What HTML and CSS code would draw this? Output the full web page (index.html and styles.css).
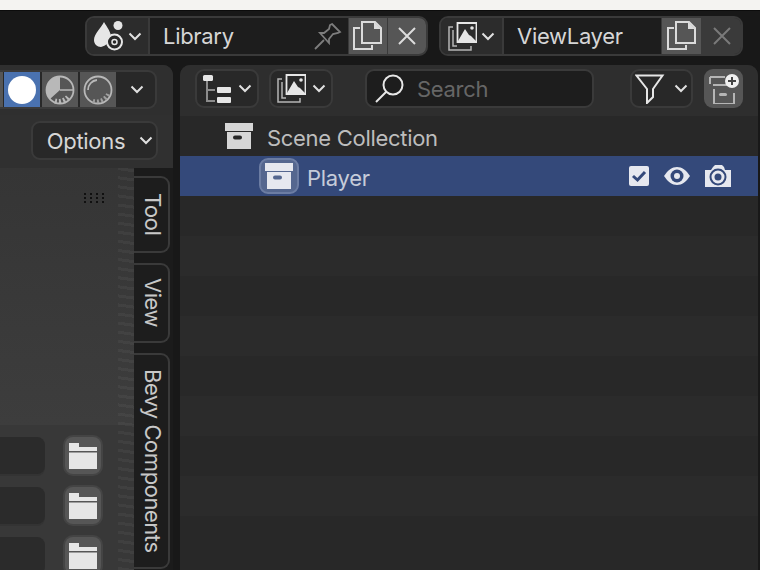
FILE: index.html
```html
<!DOCTYPE html>
<html lang="en">
<head>
<meta charset="UTF-8">
<title>Outliner</title>
<link rel="stylesheet" href="styles.css">
</head>
<body>
<svg class="defs" width="0" height="0">
  <symbol id="i-chevron" viewBox="0 0 14 9"><path d="M1.500 1.500 7 7l5.500-5.500" fill="none" stroke="currentColor" stroke-width="2"/></symbol>
  <symbol id="i-copy" viewBox="0 0 30 30"><path d="M7 7H1v21h18v-4" fill="none" stroke="currentColor" stroke-width="2"/><path d="M9 1h13l6 6v15H9z" fill="none" stroke="currentColor" stroke-width="2"/><path d="M21 1v7h7z" fill="currentColor"/></symbol>
  <symbol id="i-close" viewBox="0 0 18 18"><path d="M1 1l16 16M17 1 1 17" fill="none" stroke="currentColor" stroke-width="2"/></symbol>
  <symbol id="i-box" viewBox="0 0 28 26"><path fill-rule="evenodd" d="M0 0h28v8H0zM2 9h24v17H2zM10 12.500a1.500 1.500 0 0 0 0 4h5a2 2 0 0 0 0-4z" fill="currentColor"/></symbol>
  <symbol id="i-layers" viewBox="0 0 29 29"><path d="M5 5H1v23h22v-4M5 8v16h4" fill="none" stroke="#b5b5b5" stroke-width="1.500"/><path d="M9.500 1h19v19h-19z" fill="none" stroke="#e6e6e6" stroke-width="1.800"/><path d="M10 19l7-12 4 6 2 1 5 5v1z" fill="#e6e6e6"/><circle cx="24" cy="6" r="1.800" fill="#e6e6e6"/></symbol>
  <symbol id="i-folder" viewBox="0 0 28 26"><path d="M0 0h10v4h18v4H0zM0 9.500h28V26H0z" fill="currentColor"/></symbol>
</svg>

<div class="strip"></div>

<header class="topbar">
  <div class="group">
    <div class="drop">
      <svg width="30" height="30" viewBox="0 0 30 30"><path d="M10 1c3 5 7 10 7 15a8 8 0 0 1-3 6c-2 2-4 3-7 4-4 0-7-3-7-7 0-6 7-12 10-18z" fill="#e6e6e6"/><circle cx="24" cy="4.500" r="4.500" fill="#e6e6e6"/><circle cx="20.500" cy="21" r="7.500" fill="#282828" stroke="#e6e6e6" stroke-width="2"/><circle cx="20.500" cy="21" r="2.500" fill="none" stroke="#e6e6e6" stroke-width="1.500"/></svg>
      <svg class="chev"><use href="#i-chevron"/></svg>
    </div>
    <div class="field field-lib">
      <span>Library</span>
      <svg class="pin" width="28" height="28" viewBox="0 0 28 28"><path d="M1 27 10 18M18 2l8 8-2 1-5 1-4 5v4L6 11h4l5-4 1-4z" fill="none" stroke="#7d7d7d" stroke-width="1.800"/></svg>
    </div>
    <button class="tool on"><svg width="30" height="30" class="ic"><use href="#i-copy"/></svg></button>
    <button class="tool on"><svg width="18" height="18" class="ic"><use href="#i-close"/></svg></button>
  </div>
  <div class="group">
    <div class="drop">
      <svg width="29" height="29"><use href="#i-layers"/></svg>
      <svg class="chev"><use href="#i-chevron"/></svg>
    </div>
    <div class="field field-layer"><span>ViewLayer</span></div>
    <button class="tool on"><svg width="30" height="30" class="ic"><use href="#i-copy"/></svg></button>
    <button class="tool off"><svg width="18" height="18" class="dim"><use href="#i-close"/></svg></button>
  </div>
</header>

<main class="areas">
  <section class="viewport-area">
    <div class="vp-header">
      <div class="shading">
        <span class="shade-sliver"></span>
        <button class="shade active"><svg width="32" height="32" viewBox="0 0 32 32"><circle cx="16" cy="16" r="14" fill="#fff"/></svg></button>
        <button class="shade"><svg width="30" height="30" viewBox="0 0 30 30"><circle cx="15" cy="15" r="13.500" fill="none" stroke="#b8b8b8" stroke-width="1.800"/><path d="M15 15V1.500A13.500 13.500 0 0 0 5 24z" fill="#b8b8b8"/><path d="M15 15h13" stroke="#b8b8b8" stroke-width="1.500"/><path d="M10 26a13 13 0 0 0 13-4" fill="none" stroke="#b8b8b8" stroke-width="5" stroke-dasharray="2 2"/></svg></button>
        <button class="shade"><svg width="30" height="30" viewBox="0 0 30 30"><circle cx="15" cy="15" r="13.500" fill="none" stroke="#b8b8b8" stroke-width="1.800"/><path d="M5 15a10 10 0 0 1 9-10" fill="none" stroke="#b8b8b8" stroke-width="1.800"/><path d="M10 26a13 13 0 0 0 15-7" fill="none" stroke="#a0a0a0" stroke-width="4" stroke-dasharray="2 2"/></svg></button>
        <button class="shade-more"><svg class="chev"><use href="#i-chevron"/></svg></button>
      </div>
    </div>
    <div class="vp-options">
      <button class="options"><span>Options</span><svg class="chev"><use href="#i-chevron"/></svg></button>
    </div>
    <div class="vp-body">
      <div class="canvas">
        <div class="canvas-top"><span class="grip"></span></div>
        <div class="canvas-rows">
          <div class="path-row"><span class="path-field"></span><button class="folder"><svg width="28" height="26"><use href="#i-folder"/></svg></button></div>
          <div class="path-row"><span class="path-field"></span><button class="folder"><svg width="28" height="26"><use href="#i-folder"/></svg></button></div>
          <div class="path-row"><span class="path-field"></span><button class="folder"><svg width="28" height="26"><use href="#i-folder"/></svg></button></div>
        </div>
        <div class="texture"></div>
      </div>
      <nav class="tabs">
        <div class="tab tab-tool"><span>Tool</span></div>
        <div class="tab tab-view"><span>View</span></div>
        <div class="tab tab-bevy"><span>Bevy Components</span></div>
      </nav>
    </div>
  </section>

  <section class="outliner">
    <div class="ol-header">
      <button class="pill pill-mode">
        <svg width="30" height="30" viewBox="0 0 30 30"><path d="M5 7v20h8M5 16h8" fill="none" stroke="#8c8c8c" stroke-width="2"/><rect x="1" y="1" width="10" height="6" rx="1.500" fill="#e6e6e6"/><rect x="15" y="13" width="14" height="6" rx="1" fill="#e6e6e6"/><rect x="15" y="23" width="14" height="6" rx="1" fill="#e6e6e6"/></svg>
        <svg class="chev"><use href="#i-chevron"/></svg>
      </button>
      <button class="pill pill-layer">
        <svg width="29" height="29"><use href="#i-layers"/></svg>
        <svg class="chev"><use href="#i-chevron"/></svg>
      </button>
      <div class="search">
        <svg width="30" height="30" viewBox="0 0 30 30"><circle cx="18" cy="11" r="9.500" fill="none" stroke="#e6e6e6" stroke-width="2"/><path d="M11 18 1 28" stroke="#e6e6e6" stroke-width="2"/></svg>
        <span>Search</span>
      </div>
      <button class="pill pill-filter">
        <svg width="30" height="30" viewBox="0 0 30 30"><path d="M1.500 1.500h26L18 15v8l-6 6V15z" fill="none" stroke="#e6e6e6" stroke-width="2"/></svg>
        <svg class="chev"><use href="#i-chevron"/></svg>
      </button>
      <button class="new-coll">
        <svg width="30" height="30" viewBox="0 0 30 30"><path d="M4 11h16M5 15v15h20V19M1 3h15M1 3v7" fill="none" stroke="#b5b5b5" stroke-width="2"/><rect x="10" y="19" width="8" height="3" rx="1.500" fill="#b5b5b5"/><circle cx="23" cy="7" r="7" fill="#f0f0f0"/><path d="M23 3v8M19 7h8" stroke="#444" stroke-width="2"/></svg>
      </button>
    </div>
    <div class="tree">
      <div class="row row-scene">
        <svg class="coll" width="28" height="26"><use href="#i-box"/></svg>
        <span>Scene Collection</span>
      </div>
      <div class="row row-player">
        <span class="coll-btn"><svg width="28" height="26"><use href="#i-box"/></svg></span>
        <span>Player</span>
        <div class="row-icons">
          <svg width="20" height="20" viewBox="0 0 20 20"><rect width="20" height="20" rx="2" fill="#e6e8ef"/><path d="M4 10l4.500 4L16 6" fill="none" stroke="#34497a" stroke-width="3"/></svg>
          <svg width="26" height="18" viewBox="0 0 26 18"><path d="M0 9C4 3 8 0 13 0s9 3 13 9c-4 6-8 9-13 9S4 15 0 9z" fill="#e6e8ef"/><circle cx="13" cy="9" r="6.500" fill="#34497a"/><circle cx="13" cy="9" r="3" fill="#e6e8ef"/></svg>
          <svg width="26" height="22" viewBox="0 0 26 22"><path d="M0 5h6l2-3 2-2h7l2 2 1 3h6v17H0z" fill="#e6e8ef"/><circle cx="13" cy="12" r="7.500" fill="none" stroke="#34497a" stroke-width="2"/><circle cx="13" cy="12" r="3.500" fill="#34497a"/></svg>
        </div>
      </div>
      <div class="row"></div><div class="row"></div><div class="row"></div><div class="row"></div>
      <div class="row"></div><div class="row"></div><div class="row"></div><div class="row"></div>
    </div>
  </section>
</main>
</body>
</html>
```

FILE: styles.css
```css
html, body {margin:0; padding:0; height:570px; overflow:hidden;}
body {background:#181818; color:#d6d6d6; font-family:"Inter","Liberation Sans",sans-serif; font-size:22px; letter-spacing:-0.3px;}
button {font:inherit; letter-spacing:inherit; color:inherit; border:0; padding:0; margin:0; background:none; display:flex; align-items:center; justify-content:center;}
svg {display:block; flex:none;}
.defs {position:absolute;}
.chev {width:14px; height:9px; color:#e0e0e0;}
.ic {color:#dcdcdc;}
.dim {color:#7a7a7a;}

.strip {height:10px; background:#f4f3f1; border-bottom:1px solid #0c0c0c;}

/* top bar */
.topbar {height:54px; box-sizing:border-box; padding:5px 17px 0 0; display:flex; justify-content:flex-end; align-items:flex-start; gap:11px;}
.group {display:flex; height:40px; box-sizing:border-box; border:2px solid #3a3a3a; border-radius:9px; background:#282828; overflow:hidden;}
.drop {width:61px; display:flex; align-items:center; gap:4px; padding-left:7px; box-sizing:border-box; background:#2c2c2c;}
.field {display:flex; align-items:center; background:#1d1d1d; border-left:2px solid #3a3a3a; padding-left:13px; box-sizing:border-box;}
.field-lib {width:200px;}
.field-layer {width:159px;}
.pin {margin-left:auto; margin-right:6px;}
.tool {width:40px; border-left:1px solid #3a3a3a; box-sizing:border-box;}
.field-lib ~ .tool {width:39px;}
.tool.on {background:#565656;}
.tool.off {background:#3a3a3a;}

/* layout */
.areas {display:flex; gap:7px; height:505px;}
.viewport-area {width:173px; flex:none; display:flex; flex-direction:column; background:#303030; border-radius:0 10px 0 0; overflow:hidden;}
.outliner {width:578px; flex:none; display:flex; flex-direction:column; background:#282828; border-radius:10px 10px 0 0; overflow:hidden;}

/* left area */
.vp-header {height:50px; flex:none; box-sizing:border-box; padding:5px 16px 0 0; background:#2f2f2f;}
.shading {display:flex; justify-content:flex-end; height:39px; box-sizing:border-box; border:2px solid #3a3a3a; border-left:0; border-radius:0 9px 9px 0; background:#282828;}
.shade-sliver {width:3px; background:#565656; margin-right:1px;}
.shade {width:36px; margin-right:2px; background:#565656;}
.shade.active {background:#4a72b0;}
.shade-more {flex:1;}
.vp-options {height:53px; flex:none; box-sizing:border-box; padding:6px 15px 0 0; display:flex; justify-content:flex-end; background:#303030;}
.options {width:127px; height:39px; box-sizing:border-box; border:2px solid #3a3a3a; border-radius:9px; background:#282828; gap:14px; padding-left:11px;}
.vp-body {flex:1; display:flex; min-height:0;}
.canvas {position:relative; width:134px; flex:none; background:#383838;}
.canvas-top {height:257px; box-sizing:border-box; padding:24px 28px 0 0; display:flex; justify-content:flex-end; background:linear-gradient(#353535, #3d3d3d);}
.grip {width:24px; height:12px; background:radial-gradient(circle, #101010 1px, transparent 1.300px) 0 0 / 6px 4px;}
.canvas-rows {display:flex; flex-direction:column; gap:13px; padding-top:12px;}
.path-row {display:flex; gap:20px; height:37px; flex:none;}
.path-field {width:45px; background:#2b2b2b; border-radius:0 8px 8px 0; box-shadow:0 2px 0 #333;}
.folder {width:36px; background:#565656; border-radius:8px; box-shadow:0 0 0 2px #444; color:#e6e6e6;}
.texture {position:absolute; top:0; right:0; bottom:0; width:16px; background:repeating-linear-gradient(8deg, rgba(255,255,255,.04) 0 3px, transparent 3px 9px);}
.tabs {flex:1; display:flex; flex-direction:column; gap:10px; padding-top:8px; background:#1b1b1b;}
.tab {width:36px; box-sizing:border-box; border:2px solid #3a3a3a; border-left:0; border-radius:0 9px 9px 0; background:#1d1d1d; padding-left:3px; display:flex; align-items:center; justify-content:center; flex:none;}
.tab span {writing-mode:vertical-rl; color:#c8c8c8; line-height:1; letter-spacing:-0.45px;}
.tab-tool {height:77px;}
.tab-view {height:80px;}
.tab-bevy {height:216px;}

/* outliner */
.ol-header {height:51px; flex:none; box-sizing:border-box; padding:4px 15px 0 15px; display:flex; align-items:flex-start; background:#2e2e2e;}
.pill {height:39px; box-sizing:border-box; border:2px solid #3a3a3a; border-radius:9px; background:#282828; gap:6px;}
.pill-mode {width:64px; margin-right:10px;}
.pill-layer {width:64px; margin-right:32px;}
.pill-filter {width:63px; margin-right:11px; gap:9px;}
.search {width:229px; height:39px; box-sizing:border-box; border:2px solid #3a3a3a; border-radius:9px; background:#1d1d1d; display:flex; align-items:center; gap:12px; padding-left:8px; margin-right:36px; color:#666;}
.new-coll {width:39px; height:39px; border-radius:9px; background:#565656;}
.tree {flex:1; overflow:hidden;}
.row {height:40px; display:flex; align-items:center; background:#282828;}
.row:nth-child(even) {background:#2b2b2b;}
.row-scene {padding-left:45px; gap:14px; color:#bdbdbd; background:#282828;}
.row-scene .coll {color:#d6d6d6;}
.row-scene span, .row-player > span:nth-child(2) {padding-top:4px;}
.row.row-player {padding-left:79px; padding-right:27px; gap:8px; background:#34497a; color:#c6ccd9;}
.coll-btn {width:40px; height:36px; box-sizing:border-box; border:2px solid #6c7da3; border-radius:9px; background:#55678f; display:flex; align-items:center; justify-content:center; color:#e6e8ef;}
.row-icons {margin-left:auto; display:flex; align-items:center; gap:15px;}
```
